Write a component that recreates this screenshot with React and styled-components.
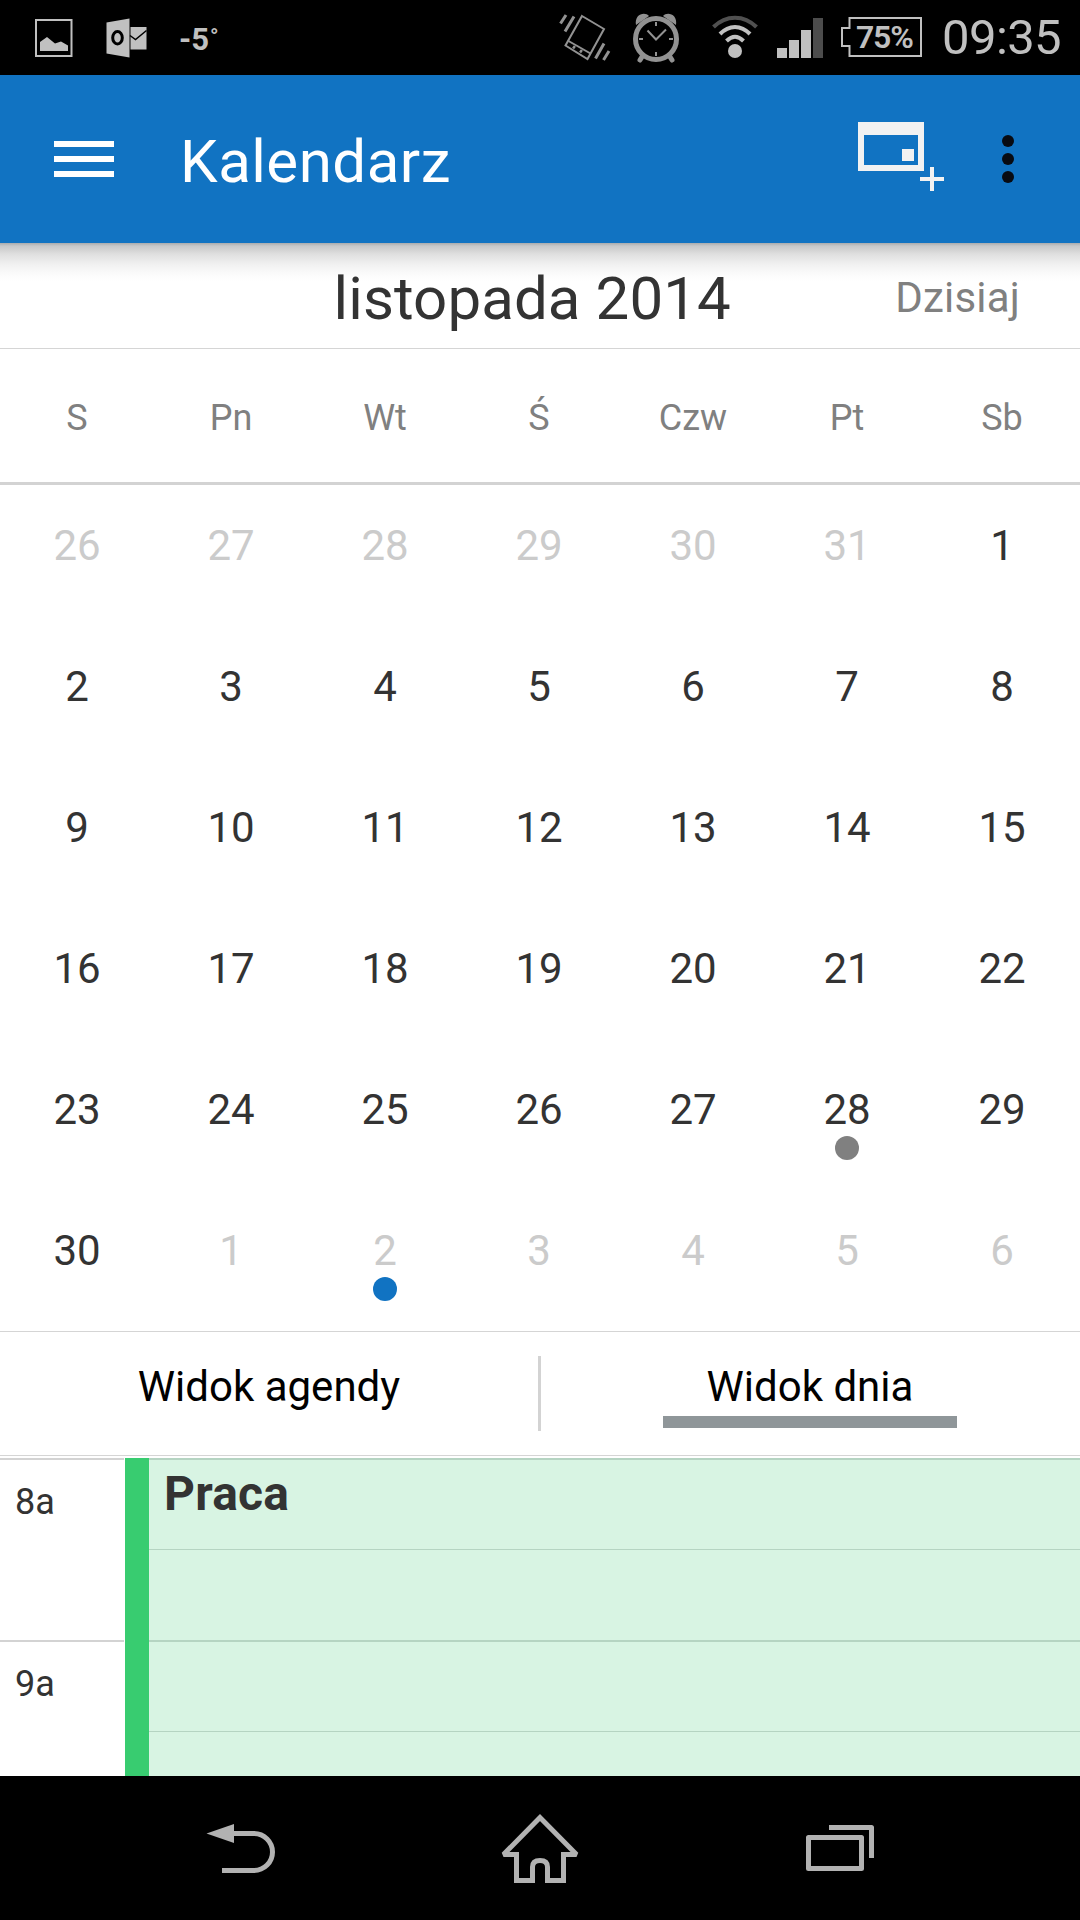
import React from "react";
import styled, { createGlobalStyle } from "styled-components";

const GlobalStyle = createGlobalStyle`
  * {
    box-sizing: border-box;
  }
  body {
    margin: 0;
    background-color: #fff;
    font-family: Roboto, "Noto Sans", sans-serif;
    color: #333;
  }
`;

const Screen = styled.div`
  display: flex;
  flex-direction: column;
  width: 1080px;
  height: 1920px;
  overflow: hidden;
  background-color: #fff;
`;

const StatusBar = styled.div`
  display: flex;
  align-items: center;
  height: 75px;
  padding-left: 35px;
  background-color: #000;
  color: #c0c0c0;
`;

const StatusIcon = styled.svg`
  flex: none;
  width: ${({ $w }) => $w}px;
  height: 75px;
  margin-right: ${({ $gap }) => $gap}px;
`;

const Temperature = styled.div`
  flex: 1;
  font-size: 31px;
  font-weight: 700;
  line-height: 75px;
  padding-top: 3px;
`;

const Degree = styled.span`
  position: relative;
  top: -6px;
  left: 1px;
  font-size: 22px;
  line-height: 1;
`;

const Battery = styled.div`
  position: relative;
  width: 82px;
  height: 75px;
  margin-right: 19px;
`;

const BatteryLevel = styled.span`
  position: absolute;
  left: 15px;
  top: 0;
  font-size: 32px;
  font-weight: 600;
  line-height: 75px;
  letter-spacing: -1.2px;
`;

const Clock = styled.div`
  width: 138px;
  font-size: 49px;
  line-height: 79px;
  letter-spacing: -0.6px;
  white-space: nowrap;
`;

const AppBar = styled.div`
  display: flex;
  align-items: center;
  height: 168px;
  padding-left: 54px;
  background-color: #1173c2;
`;

const MenuButton = styled.div`
  display: flex;
  flex-direction: column;
  gap: 9px;
  width: 60px;
  margin-right: 66px;
`;

const MenuLine = styled.span`
  height: 6px;
  background-color: #fff;
`;

const Title = styled.h1`
  flex: 1;
  margin: 0;
  padding-top: 5px;
  font-size: 60px;
  font-weight: 400;
  letter-spacing: 0.5px;
  color: #fff;
`;

const NewEventIcon = styled.svg`
  width: 86px;
  height: 168px;
  margin-right: 58px;
`;

const MoreButton = styled.div`
  display: flex;
  flex-direction: column;
  gap: 6px;
  margin-right: 66px;
`;

const MoreDot = styled.span`
  width: 12px;
  height: 12px;
  border-radius: 50%;
  background-color: #080b12;
`;

const MonthBar = styled.div`
  display: grid;
  grid-template-columns: 1fr 396px 1fr;
  align-items: center;
  height: 106px;
  padding-right: 17px;
  border-bottom: 1px solid #d5d5d5;
  background: linear-gradient(
    #a9abad 0,
    #c6c8ca 3px,
    #d3d3d3 7px,
    #dfdfdf 11px,
    #f0f0f0 21px,
    #fafafa 30px,
    #fff 38px
  );
`;

const MonthName = styled.h2`
  grid-column: 2;
  margin: 0;
  padding-top: 6px;
  font-size: 60px;
  font-weight: 400;
  letter-spacing: 0.1px;
  text-align: center;
  white-space: nowrap;
`;

const TodayButton = styled.div`
  justify-self: end;
  margin-right: 43px;
  padding-top: 4px;
  font-size: 42px;
  letter-spacing: 0.2px;
  color: #808080;
`;

const WeekDays = styled.div`
  display: grid;
  grid-template-columns: repeat(6, 154px) 1fr;
  height: 136px;
  border-bottom: 3px solid #d3d3d3;
`;

const WeekDay = styled.div`
  font-size: 36px;
  line-height: 139px;
  text-align: center;
  color: #808080;
`;

const MonthGrid = styled.div`
  display: grid;
  grid-template-columns: repeat(6, 154px) 1fr;
  grid-auto-rows: 141px;
`;

const Day = styled.div`
  display: flex;
  flex-direction: column;
  align-items: center;
  padding-top: 36px;
  font-size: 42px;
  line-height: 50px;
  color: ${({ $muted }) => ($muted ? "#cbcbcb" : "#333")};
`;

const DayDot = styled.span`
  width: 24px;
  height: 24px;
  margin-top: 1px;
  border-radius: 50%;
  background-color: ${({ $color }) => $color};
`;

const Tabs = styled.div`
  display: flex;
  height: 125px;
  padding-top: 24px;
  border-top: 1px solid #d5d5d5;
  border-bottom: 1px solid #d5d5d5;
`;

const Tab = styled.div`
  display: flex;
  flex-direction: column;
  align-items: center;
  width: 538px;
  height: 75px;
  padding-top: 6px;
  font-size: 42px;
  line-height: 50px;
  color: #000;

  & + & {
    width: 541px;
    border-left: 3px solid #d3d3d3;
  }
`;

const TabMarker = styled.span`
  width: 294px;
  height: 12px;
  margin-top: 4px;
  background-color: #8f9699;
`;

const DayView = styled.div`
  display: grid;
  grid-template-columns: 124px 1fr;
  height: 320px;
  padding-top: 2px;
  overflow: hidden;
`;

const Hour = styled.div`
  height: 182px;
  padding: 21px 0 0 15px;
  border-top: 2px solid #d3d3d3;
  font-size: 36px;
  line-height: 42px;
`;

const Event = styled.div`
  margin-left: 1px;
  border-left: 24px solid #38cc70;
  background-color: #d8f4e3;
`;

const HalfHour = styled.div`
  height: 91px;
  padding-left: 15px;
  border-top: ${({ $half }) => ($half ? 1 : 2)}px solid #b5d4c2;
`;

const EventTitle = styled.div`
  padding-top: 6px;
  font-size: 48px;
  font-weight: 700;
  line-height: 56px;
  letter-spacing: 0.2px;
`;

const NavBar = styled.div`
  display: flex;
  justify-content: center;
  height: 144px;
  background-color: #000;
`;

const NavIcon = styled.svg`
  width: 300px;
  height: 144px;
`;

const weekDays = ["S", "Pn", "Wt", "Ś", "Czw", "Pt", "Sb"];

const days = [
  ...[26, 27, 28, 29, 30, 31].map((n) => ({ n, muted: true })),
  ...Array.from({ length: 30 }, (_, i) => ({ n: i + 1 })),
  ...[1, 2, 3, 4, 5, 6].map((n) => ({ n, muted: true })),
];
days[33].dot = "#808080";
days[37].dot = "#1173c2";

const StatusIcons = () => (
  <StatusBar>
    <StatusIcon $w={38} $gap={33} viewBox="35 0 38 75">
      <rect x="36" y="20" width="35.5" height="36" fill="none" stroke="#c0c0c0" strokeWidth="2" />
      <path d="M40 51V42l7-5 8 6.500 6-2 7 4V51z" fill="#c0c0c0" />
    </StatusIcon>
    <StatusIcon $w={42} $gap={31} viewBox="106 0 42 75">
      <path d="M106.500 22.500 129.500 18.500V57.500L106.500 53.500z" fill="#c0c0c0" />
      <ellipse cx="117.500" cy="37.700" rx="4.800" ry="6.200" fill="none" stroke="#000" strokeWidth="3" />
      <path d="M130.500 27H146.500V49.500H130.500z" fill="#c0c0c0" />
      <path d="M130 35.500 135.500 39.500 146.500 30.500" fill="none" stroke="#000" strokeWidth="1.500" />
    </StatusIcon>
    <Temperature>
      -5<Degree>°</Degree>
    </Temperature>
    <StatusIcon $w={52} $gap={22} viewBox="559 0 52 75">
      <g fill="none" stroke="#929292">
        <path d="M582 16 604 29 587.500 59 565.500 45.500z" strokeWidth="2" />
        <path d="M568.500 41 590.500 53.500" strokeWidth="2" />
        <path d="M573 46.500 575 48M580 50.500 582 52" strokeWidth="3" />
        <path d="M566 15 560.500 23.500M574 16.500 565 31.500M604 43.500 595.500 58.500M609 51 603.500 60" strokeWidth="3" />
      </g>
    </StatusIcon>
    <StatusIcon $w={47} $gap={32} viewBox="633 0 47 75">
      <g fill="none" stroke="#929292">
        <circle cx="656" cy="39" r="20.500" strokeWidth="5" />
        <path d="M656 22V26M656 52V56M639 39H643M669 39H673" strokeWidth="2" />
        <path d="M647.500 30.500 656 39.500 666 29.500" strokeWidth="2" />
        <path d="M642.500 56 640 60M669.500 56 672 60" strokeWidth="5" strokeLinecap="round" />
      </g>
      <path d="M636 25C634 14 645 11 649 16zM676 25C678 14 667 11 663 16z" fill="#929292" />
    </StatusIcon>
    <StatusIcon $w={46} $gap={19} viewBox="712 0 46 75">
      <circle cx="735" cy="51" r="7" fill="#c0c0c0" />
      <g fill="none" stroke="#c0c0c0" strokeWidth="4">
        <path d="M713.500 27C726 14.500 744 14.500 756.500 27" stroke="#505050" />
        <path d="M720 34C729 24.500 741 24.500 750 34" />
        <path d="M726.500 41C732 35.500 738 35.500 743.500 41" />
      </g>
    </StatusIcon>
    <StatusIcon $w={46} $gap={18} viewBox="777 0 46 75">
      <path d="M777 48H787V58H777zM789 40H799V58H789zM801 30H811V58H801z" fill="#c0c0c0" />
      <path d="M813 18H823V58H813z" fill="#4c4c4c" />
    </StatusIcon>
    <Battery>
      <svg width="82" height="75" viewBox="841 0 82 75">
        <path d="M849.500 18H921V56H849.500V46H842V28H849.500z" fill="none" stroke="#c0c0c0" strokeWidth="2" />
      </svg>
      <BatteryLevel>75%</BatteryLevel>
    </Battery>
    <Clock>09:35</Clock>
  </StatusBar>
);

const Header = () => (
  <AppBar>
    <MenuButton>
      <MenuLine />
      <MenuLine />
      <MenuLine />
    </MenuButton>
    <Title>Kalendarz</Title>
    <NewEventIcon viewBox="858 75 86 168">
      <path
        d="M858 122H924V171H858zM864 135V165H918V135z"
        fill="#f2f2f2"
        fillRule="evenodd"
      />
      <path d="M902 149H914V161H902z" fill="#f2f2f2" />
      <path d="M930 167H934V177H944V181H934V191H930V181H920V177H930z" fill="#f2f2f2" />
    </NewEventIcon>
    <MoreButton>
      <MoreDot />
      <MoreDot />
      <MoreDot />
    </MoreButton>
  </AppBar>
);

const Navigation = () => (
  <NavBar>
    <NavIcon viewBox="90 1776 300 144">
      <path d="M206.500 1833.500 234 1824V1843z" fill="#b2b2b2" />
      <path d="M233 1833.500H254A18.500 18.500 0 0 1 254 1870.500H222" fill="none" stroke="#b2b2b2" strokeWidth="5" />
    </NavIcon>
    <NavIcon viewBox="390 1776 300 144">
      <path
        d="M540 1817.500 503.500 1854.500H516.500V1880.500H532.500V1867Q532.500 1860.500 540 1860.500T547.500 1867V1880.500H563.500V1854.500H576.500z"
        fill="none"
        stroke="#b2b2b2"
        strokeWidth="5"
        strokeMiterlimit="2"
      />
    </NavIcon>
    <NavIcon viewBox="690 1776 300 144">
      <g fill="none" stroke="#b2b2b2" strokeWidth="5" strokeLinejoin="round">
        <rect x="808.500" y="1837.500" width="53" height="31" />
        <path d="M829 1827.500H871.500V1858" />
      </g>
    </NavIcon>
  </NavBar>
);

const App = () => {
  return (
    <>
      <GlobalStyle />
      <Screen>
        <StatusIcons />
        <Header />
        <MonthBar>
          <MonthName>listopada 2014</MonthName>
          <TodayButton>Dzisiaj</TodayButton>
        </MonthBar>
        <WeekDays>
          {weekDays.map((name) => (
            <WeekDay key={name}>{name}</WeekDay>
          ))}
        </WeekDays>
        <MonthGrid>
          {days.map(({ n, muted, dot }, i) => (
            <Day key={i} $muted={muted}>
              {n}
              {dot && <DayDot $color={dot} />}
            </Day>
          ))}
        </MonthGrid>
        <Tabs>
          <Tab>Widok agendy</Tab>
          <Tab>
            Widok dnia
            <TabMarker />
          </Tab>
        </Tabs>
        <DayView>
          <div>
            <Hour>8a</Hour>
            <Hour>9a</Hour>
          </div>
          <Event>
            <HalfHour>
              <EventTitle>Praca</EventTitle>
            </HalfHour>
            <HalfHour $half />
            <HalfHour />
            <HalfHour $half />
          </Event>
        </DayView>
        <Navigation />
      </Screen>
    </>
  );
};

export default App;
